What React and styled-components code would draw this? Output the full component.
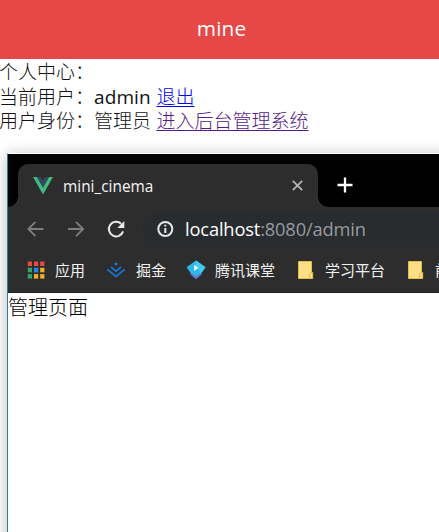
import React from "react";
import styled, { createGlobalStyle } from "styled-components";

const Global = createGlobalStyle`
  * { box-sizing: border-box; }
  body { margin: 0; background: #fff; overflow: hidden; }
`;
const Page = styled.div`
  width: 439px;
  height: 532px;
  overflow: hidden;
  color: #111;
  font-family: "Open Sans", "Noto Sans CJK SC", sans-serif;
  white-space: nowrap;
`;
const Header = styled.header`
  height: 59px;
  padding-left: 4px;
  background: #e54847;
  color: #fff;
  font-size: 20.8px;
  font-weight: 500;
  letter-spacing: 0.1px;
  line-height: 57px;
  text-align: center;
`;
const Profile = styled.section`
  height: 94px;
  padding-top: 1px;
  font-size: 19px;
  font-weight: 300;
`;
const Line = styled.div`
  display: flex;
  height: 24.6px;
  line-height: 24.6px;
`;
const Label = styled.span`
  width: 94px;
  margin-left: -1px;
  margin-right: 1px;
`;
const Value = styled.span`
  width: 62.5px;
  font-weight: ${(p) => (p.$latin ? 400 : 300)};
  letter-spacing: ${(p) => (p.$latin ? "0.1px" : "0")};
`;
const Link = styled.a`
  color: ${(p) => (p.$visited ? "#551a8b" : "#0000ee")};
  text-decoration: underline;
  text-decoration-thickness: 1px;
  text-underline-offset: 2px;
`;
const Browser = styled.section`
  width: 450px;
  height: 400px;
  margin-left: 7px;
  border-left: 1px solid #2d7ba8;
  border-top: 1px solid #fff;
  background: #fff;
  box-shadow: 0 2px 14px rgba(0, 0, 0, 0.28);
`;
const TabStrip = styled.div`
  display: flex;
  height: 53px;
  padding-top: 10px;
  background: #000;
`;
const Corner = styled.i`
  width: 10px;
  height: 10px;
  align-self: flex-end;
  background: radial-gradient(circle at ${(p) => (p.$right ? "100%" : "0")} 0, #000 9.5px, #2d2d2d 10px);
`;
const Tab = styled.div`
  display: flex;
  align-items: center;
  width: 300px;
  height: 43px;
  padding: 0 15px;
  border-radius: 10px 10px 0 0;
  background: #2d2d2d;
  color: #f5f5f5;
  font-size: 15.4px;
`;
const TabTitle = styled.span`
  flex: 1;
  margin-left: 10px;
  padding-top: 1px;
`;
const NewTab = styled.div`
  margin: 13px 0 0 9px;
  height: 16px;
  line-height: 0;
`;
const Toolbar = styled.div`
  display: flex;
  align-items: center;
  height: 43px;
  padding-left: 17px;
  background: #2d2d2d;
`;
const NavIcons = styled.div`
  display: flex;
  gap: 20px;
  width: 118px;
`;
const Address = styled.div`
  display: flex;
  align-items: center;
  flex: 1;
  height: 36px;
  padding-left: 13px;
  border-radius: 18px 0 0 18px;
  background: #282c2f;
  color: #969b9f;
  font-size: 18.3px;
`;
const Url = styled.span`
  margin-left: 11px;
  letter-spacing: -0.16px;
`;
const Host = styled.span`
  color: #fff;
`;
const Bookmarks = styled.div`
  display: flex;
  height: 43px;
  padding-left: 18px;
  border-bottom: 1px solid #222;
  background: #2d2d2d;
  color: #f2f2f2;
  font-size: 15px;
`;
const Bookmark = styled.div`
  display: flex;
  flex: none;
  width: ${(p) => p.$width}px;
  height: 39px;
  align-items: center;
  gap: ${(p) => p.$gap || 10}px;
`;
const BookmarkText = styled.span`
  margin-top: -1px;
`;
const Content = styled.main`
  padding-top: 1px;
  color: #000;
  font-size: 20px;
  font-weight: 300;
  line-height: 28px;
`;

const VueLogo = () => (
  <svg width="20" height="18" viewBox="0 0 20 18">
    <path d="M0 0h4l6 10.5L16 0h4L10 17.5Z" fill="#42b883" />
    <path d="M4 0h3.8L10 3.8 12.2 0H16l-6 10.5Z" fill="#35495e" />
  </svg>
);
const Arrow = ({ forward }) => (
  <svg width="20" height="20" viewBox="0 0 20 20" fill="none" stroke="#7d7d7d" strokeWidth="1.8">
    <path d={forward ? "M3 10h15M11 2.8 18.2 10 11 17.2" : "M18.5 10H3.5M10.5 2.8 3.3 10l7.2 7.2"} />
  </svg>
);
const Reload = () => (
  <svg width="20" height="20" viewBox="0 0 20 20">
    <path d="M18.1 12.4A7.3 7.3 0 1 1 16.2 4.8" fill="none" stroke="#e8e8e8" strokeWidth="2" />
    <path d="M19.3 2v7h-7Z" fill="#e8e8e8" />
  </svg>
);
const Info = () => (
  <svg width="18" height="18" viewBox="0 0 18 18">
    <circle cx="9.3" cy="9" r="7" fill="none" stroke="#e8e8e8" strokeWidth="2" />
    <path d="M8.3 8h2v5h-2zM8.3 4.8h2v1.8h-2z" fill="#e8e8e8" />
  </svg>
);
const colors = ["#e94b40", "#e94b40", "#e94b40", "#34a36b", "#268bf0", "#f3b325", "#34a36b", "#f3b325", "#f3b325"];
const Apps = () => (
  <svg width="19" height="20">
    {colors.map((c, i) => (
      <rect key={i} x={1.8 + (i % 3) * 6.2} y={1.5 + Math.floor(i / 3) * 6.3} width="4.2" height="4.5" fill={c} />
    ))}
  </svg>
);
const Juejin = () => (
  <svg width="20" height="20" viewBox="0 0 20 20" fill="none" stroke="#1b70c9" strokeWidth="1.8">
    <path d="m1.2 9.3 8.8 7.2 8.8-7.2M5 7 10 11.2 15 7" />
    <path d="m10 2.2 2.2 1.9L10 5.9 7.8 4.1Z" fill="#1b70c9" stroke="none" />
  </svg>
);
const Classroom = () => (
  <svg width="20" height="20" viewBox="0 0 20 20">
    <path d="M4.5 9h11v5.5L10 19.3l-5.5-4.8Z" fill="#6877d8" />
    <path d="m10 .5 9.5 6.7-4.2 5.8L10 16l-5.3-3L.5 7.2Z" fill="#29b8e9" />
    <path d="m10 .5 9.5 6.7-4.2 5.8L10 8Z" fill="#42caef" />
    <path d="m8.2 4.8 4.2 3-4.2 3.2Z" fill="#fff" />
  </svg>
);
const Folder = () => (
  <svg width="18" height="20" viewBox="0 0 18 20">
    <path d="M1.5 1.5h13v11h1.2v6H1.5Z" fill="#fde086" stroke="#e5be48" />
    <path d="M12.7 18v-4l1.8-1.5" fill="none" stroke="#d9b03a" />
  </svg>
);

const bookmarks = [
  { name: "应用", width: 80, Icon: Apps },
  { name: "掘金", width: 80, Icon: Juejin },
  { name: "腾讯课堂", width: 111, gap: 9, Icon: Classroom },
  { name: "学习平台", width: 110, Icon: Folder },
  { name: "前端", width: 110, Icon: Folder },
];

export default function App() {
  return (
    <Page>
      <Global />
      <Header>mine</Header>
      <Profile>
        <Line><Label>个人中心：</Label></Line>
        <Line><Label>当前用户：</Label><Value $latin>admin</Value><Link>退出</Link></Line>
        <Line><Label>用户身份：</Label><Value>管理员</Value><Link $visited>进入后台管理系统</Link></Line>
      </Profile>
      <Browser>
        <TabStrip>
          <Corner />
          <Tab>
            <VueLogo />
            <TabTitle>mini_cinema</TabTitle>
            <svg width="11" height="11" viewBox="0 0 11 11" stroke="#b5b5b5" strokeWidth="1.8"><path d="m.8.8 9.4 9.4M10.2.8.8 10.2" /></svg>
          </Tab>
          <Corner $right />
          <NewTab>
            <svg width="16" height="16" stroke="#fff" strokeWidth="2.3"><path d="M.5 8h15M8 .5v15" /></svg>
          </NewTab>
        </TabStrip>
        <Toolbar>
          <NavIcons><Arrow /><Arrow forward /><Reload /></NavIcons>
          <Address><Info /><Url><Host>localhost</Host>:8080/admin</Url></Address>
        </Toolbar>
        <Bookmarks>
          {bookmarks.map(({ name, width, gap, Icon }) => (
            <Bookmark key={name} $width={width} $gap={gap}>
              <Icon />
              <BookmarkText>{name}</BookmarkText>
            </Bookmark>
          ))}
        </Bookmarks>
        <Content>管理页面</Content>
      </Browser>
    </Page>
  );
}
